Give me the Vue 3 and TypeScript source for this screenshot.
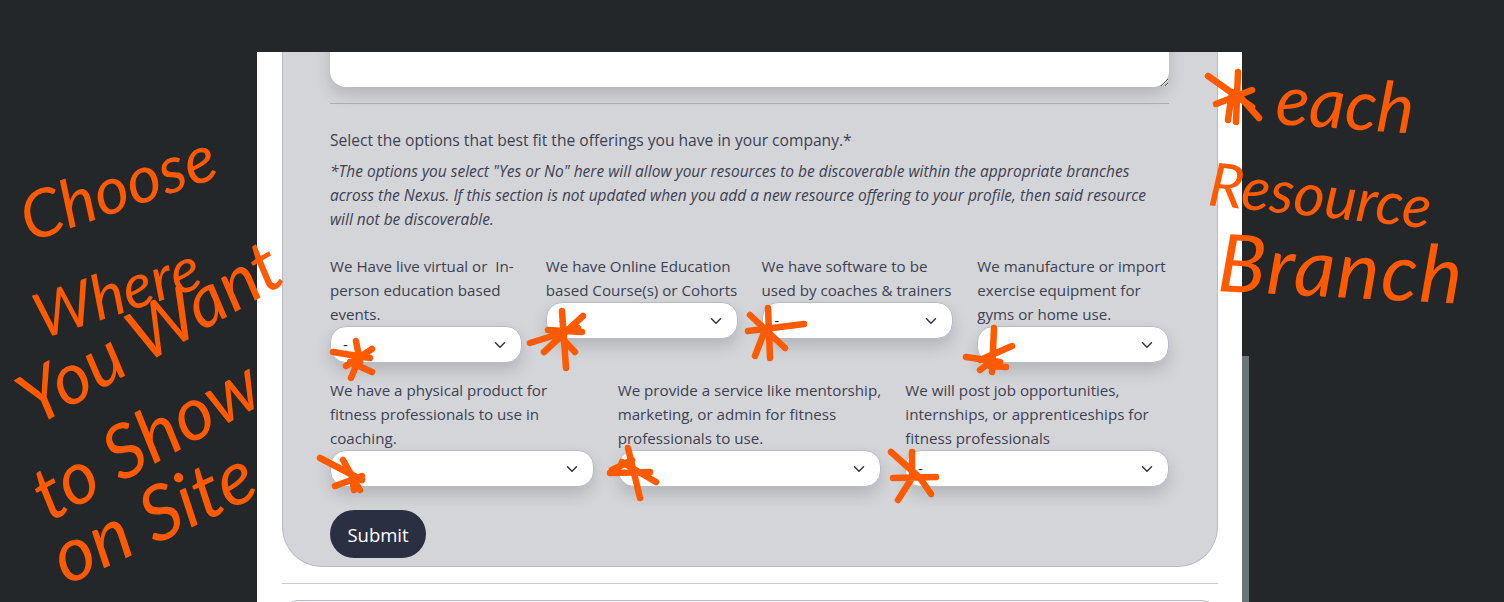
<script setup lang="ts">
interface Field { id: string; lines: string[] }

const rowOne: Field[] = [
  { id: 'events', lines: ['We Have live virtual or\u00a0 In-', 'person education based', 'events.'] },
  { id: 'courses', lines: ['We have Online Education', 'based Course(s) or Cohorts'] },
  { id: 'software', lines: ['We have software to be', 'used by coaches & trainers'] },
  { id: 'equipment', lines: ['We manufacture or import', 'exercise equipment for', 'gyms or home use.'] },
]
const rowTwo: Field[] = [
  { id: 'product', lines: ['We have a physical product for', 'fitness professionals to use in', 'coaching.'] },
  { id: 'service', lines: ['We provide a service like mentorship,', 'marketing, or admin for fitness', 'professionals to use.'] },
  { id: 'jobs', lines: ['We will post job opportunities,', 'internships, or apprenticeships for', 'fitness professionals'] },
]
const options = ['-', 'Yes', 'No']

const marks: string[] = [
  'M1208 76L1252 107M1238 72L1236 122M1216 104L1252 90M1243 100L1259 118M1232 92L1228 120',
  'M333 352L370 358M356 341L360 362M372 349L346 366M350 362L372 372M356 366L351 378',
  'M530 343L578 328M562 311L566 368M583 316L544 352M548 330L582 332M560 336L575 352',
  'M748 331L804 324M768 308L770 358M750 315L785 348M765 330L755 356',
  'M994 328L992 372M1012 346L980 360M966 357L1000 362M990 366L1006 367M980 370L990 362',
  'M320 458L362 480M343 460L360 490M335 486L362 476M352 478L354 490',
  'M628 448L640 498M610 473L650 472M622 462L656 482M612 470L632 460',
  'M891 452L920 478M912 452L912 478M893 478L936 477M920 478L931 494M912 478L898 500',
]
</script>

<template>
  <div class="page">
    <div class="sheet">
      <form class="panel" @submit.prevent>
        <textarea class="notes" aria-label="Notes"></textarea>
        <hr class="rule" />
        <p class="lead">Select the options that best fit the offerings you have in your company.*</p>
        <p class="hint">*The options you select "Yes or No" here will allow your resources to be discoverable within the appropriate branches across the Nexus. If this section is not updated when you add a new resource offering to your profile, then said resource will not be discoverable.</p>
        <div class="grid four">
          <label v-for="f in rowOne" :key="f.id" class="field">
            <span v-for="l in f.lines" :key="l" class="line">{{ l }}</span>
            <select class="choice"><option v-for="o in options" :key="o">{{ o }}</option></select>
          </label>
        </div>
        <div class="grid three">
          <label v-for="f in rowTwo" :key="f.id" class="field">
            <span v-for="l in f.lines" :key="l" class="line">{{ l }}</span>
            <select class="choice"><option v-for="o in options" :key="o">{{ o }}</option></select>
          </label>
        </div>
        <button class="submit" type="submit">Submit</button>
      </form>
      <hr class="divider" />
      <div class="next"></div>
    </div>

    <div class="scroll"></div>

    <svg class="ink" width="1504" height="602" viewBox="0 0 1504 602" aria-hidden="true">
      <path v-for="(d, i) in marks" :key="i" :d="d" />
    </svg>
    <span class="note n1">Choose</span>
    <span class="note n2">Where</span>
    <span class="note n3">You Want</span>
    <span class="note n4">to Show</span>
    <span class="note n5">on Site</span>
    <span class="note n6">each</span>
    <span class="note n7">Resource</span>
    <span class="note n8">Branch</span>
  </div>
</template>

<style>
html, body { margin: 0; background: #212529; }
</style>

<style scoped>
.page {
  position: relative;
  width: 1504px;
  height: 602px;
  overflow: hidden;
  background: #23272a;
  font-family: "Open Sans", "Noto Sans", sans-serif;
  color: #3c4152;
}
.sheet {
  width: 985px;
  height: 550px;
  margin: 0 0 0 257px;
  position: relative;
  top: 52px;
  padding: 0 24px 0 25px;
  box-sizing: border-box;
  background: #fff;
  overflow: hidden;
}
.panel {
  display: flow-root;
  box-sizing: border-box;
  height: 515px;
  padding: 0 48px 0 47px;
  background: #d4d5d9;
  border: 1px solid #b9bac9;
  border-top: 0;
  border-radius: 0 0 40px 40px;
  font-size: 15.6px;
  line-height: 24px;
}
.notes {
  display: block;
  width: 100%;
  height: 80px;
  margin-top: -45px;
  box-sizing: border-box;
  border: 0;
  border-radius: 16px;
  background: #fff;
  box-shadow: 0 8px 16px rgba(0, 0, 0, .15);
  resize: vertical;
}
.rule {
  margin: 16px 0 0;
  border: 0;
  border-top: 1px solid #acadb3;
}
.lead { margin: 24px 0 7px; }
.hint { margin: 0 0 23px; font-style: italic; font-size: 15.5px; }
.grid { display: grid; column-gap: 24px; align-items: start; }
.four { grid-template-columns: repeat(4, minmax(0, 1fr)); margin-bottom: 15px; }
.three { grid-template-columns: repeat(3, minmax(0, 1fr)); }
.field { display: flex; flex-direction: column; min-width: 0; font-size: 15.15px; }
.line { white-space: nowrap; }
.choice {
  appearance: none;
  box-sizing: border-box;
  width: 100%;
  height: 37px;
  padding: 0 36px 0 12px;
  border: 1px solid #b9bac9;
  border-radius: 16px;
  background: #fff url("data:image/svg+xml,%3Csvg xmlns='http://www.w3.org/2000/svg' viewBox='0 0 16 16'%3E%3Cpath fill='none' stroke='%23343a40' stroke-linecap='round' stroke-linejoin='round' stroke-width='2' d='M2 5l6 6 6-6'/%3E%3C/svg%3E") no-repeat right 13px center / 16px 12px;
  box-shadow: 0 8px 16px rgba(0, 0, 0, .15);
  color: #212529;
  font: inherit;
  font-size: 14.4px;
}
.submit {
  display: block;
  width: 96px;
  height: 48px;
  margin-top: 23px;
  padding: 0;
  border: 0;
  border-radius: 24px;
  background: #2a3042;
  color: #fff;
  font-family: inherit;
  font-size: 18.5px;
}
.divider {
  margin: 16px 0 0;
  border: 0;
  border-top: 1px solid #c9cad2;
}
.next {
  height: 60px;
  margin-top: 16px;
  background: #fbfbfd;
  border: 1px solid #b9bac9;
  border-radius: 16px;
}
.scroll {
  position: absolute;
  left: 1242px;
  top: 356px;
  width: 7px;
  height: 246px;
  background: #6c7577;
}
.ink {
  position: absolute;
  inset: 0;
  fill: none;
  stroke: #ff5a00;
  stroke-width: 6.5;
  stroke-linecap: round;
  stroke-linejoin: round;
}
.note {
  position: absolute;
  color: #ff5a00;
  font-family: "Lato", sans-serif;
  font-style: italic;
  line-height: 1;
  white-space: nowrap;
  transform-origin: left bottom;
}
.n1 { left: 32px; top: 184px; font-size: 66px; transform: rotate(-19deg); }
.n2 { left: 44px; top: 284px; font-size: 62px; transform: rotate(-18deg); }
.n3 { left: 40px; top: 362px; font-size: 72px; transform: rotate(-30deg); }
.n4 { left: 54px; top: 456px; font-size: 74px; transform: rotate(-29deg); }
.n5 { left: 70px; top: 518px; font-size: 76px; transform: rotate(-25deg); }
.n6 { left: 1274px; top: 62px; font-size: 70px; transform: rotate(4deg); }
.n7 { left: 1206px; top: 152px; font-size: 60px; transform: rotate(6deg); }
.n8 { left: 1216px; top: 220px; font-size: 80px; letter-spacing: 2px; transform: rotate(3deg); }
</style>
